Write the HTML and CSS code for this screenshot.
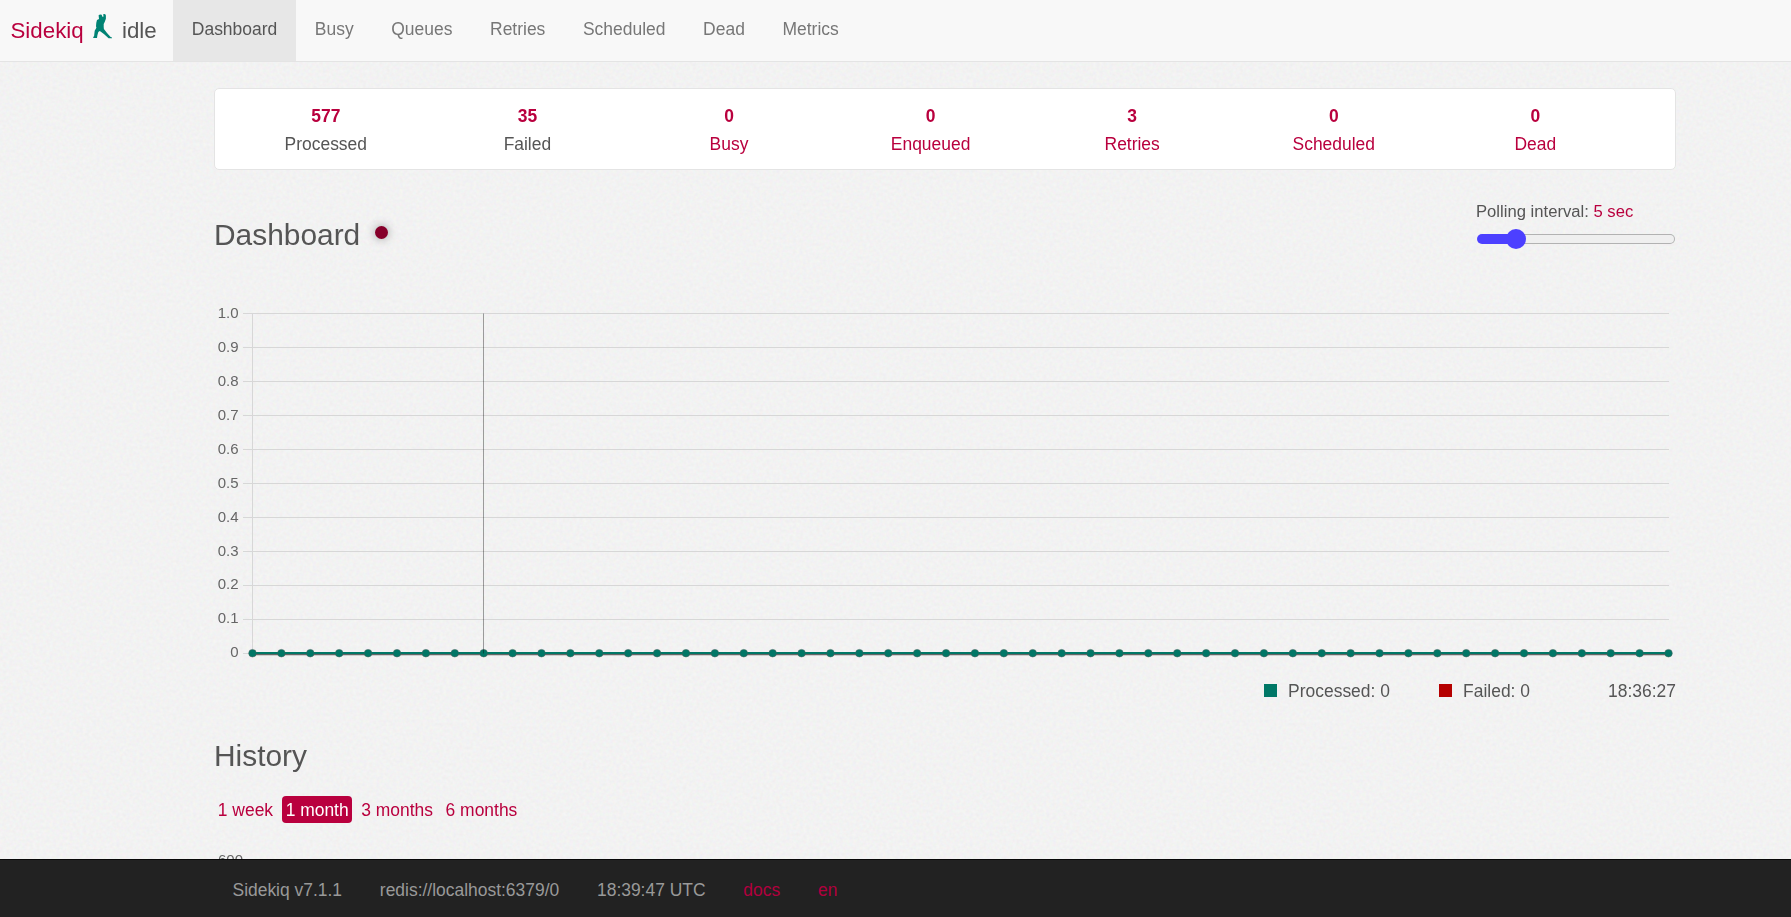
FILE: index.html
```html
<!DOCTYPE html>
<html lang="en">
<head>
<meta charset="utf-8">
<title>Sidekiq</title>
<link rel="stylesheet" href="styles.css">
</head>
<body>
<svg class="texture" aria-hidden="true">
  <filter id="grain" x="0" y="0" width="100%" height="100%" color-interpolation-filters="sRGB">
    <feTurbulence type="fractalNoise" baseFrequency="0.3" numOctaves="2" seed="4"/>
    <feColorMatrix type="matrix" values="0.05 0 0 0 0.924  0 0.05 0 0 0.924  0 0 0.05 0 0.924  0 0 0 0 1"/>
  </filter>
  <rect width="100%" height="100%" filter="url(#grain)"/>
</svg>
<nav class="navbar">
  <a class="brand">Sidekiq</a>
  <svg class="kick" viewBox="0 0 19 25"><path fill="#008374" d="M5.600 1.200 7 .5l1.700.3.6 1.900 1.300-.1-.5-2.400 2-.2.8 1.600v3.200l-1.200 3.200-1 1.900v3l.2 2.200 3.100 4 3.600 4 1.500.5v.7h-3.500l-4.700-4.200-4.100-3.100-1.500 1-.9 3.200-.4 2.700H.2l.1-1 .8-.8.6-5.400 1.700-3-.4-1.400.3-3.600L4 6.100 6 5z"/></svg>
  <span class="status">idle</span>
  <a class="tab active">Dashboard</a><a class="tab">Busy</a><a class="tab">Queues</a><a class="tab">Retries</a><a class="tab">Scheduled</a><a class="tab">Dead</a><a class="tab">Metrics</a>
</nav>
<main class="container">
  <ul class="summary">
    <li><b>577</b><span>Processed</span></li>
    <li><b>35</b><span>Failed</span></li>
    <li class="link"><b>0</b><span>Busy</span></li>
    <li class="link"><b>0</b><span>Enqueued</span></li>
    <li class="link"><b>3</b><span>Retries</span></li>
    <li class="link"><b>0</b><span>Scheduled</span></li>
    <li class="link"><b>0</b><span>Dead</span></li>
  </ul>
  <header class="heading">
    <h3>Dashboard</h3><i class="beacon"></i>
    <div class="interval">
      <div class="caption">Polling interval: <span class="red">5 sec</span></div>
      <div class="slider"><div class="fill"></div><div class="thumb"></div><div class="rest"></div></div>
    </div>
  </header>
  <svg class="chart" id="chart" viewBox="214 300 1462 366"></svg>
  <div class="legend">
    <span class="entry processed"><i class="swatch"></i>Processed: 0</span>
    <span class="entry failed"><i class="swatch"></i>Failed: 0</span>
    <time>18:36:27</time>
  </div>
  <h3 class="history">History</h3>
  <div class="ranges"><a>1 week</a><a class="chosen">1 month</a><a>3 months</a><a>6 months</a></div>
  <div class="history-axis">600</div>
</main>
<footer class="footer">
  <span>Sidekiq v7.1.1</span><span>redis://localhost:6379/0</span><span>18:39:47 UTC</span><a>docs</a><a>en</a>
</footer>
<script src="chart.js"></script>
</body>
</html>
```
FILE: styles.css
```css
* { box-sizing: border-box; }
html, body { height: 100%; }
body {
  margin: 0;
  overflow: hidden;
  background: #f2f2f2;
  color: #555;
  font: 17.45px/25px "Liberation Sans", Arial, sans-serif;
}
.texture { position: fixed; inset: 0; z-index: -1; width: 100%; height: 100%; }
.navbar {
  display: flex;
  height: 62px;
  padding-left: 10.5px;
  background: #f8f8f8;
  border-bottom: 1px solid #e4e4e4;
}
.brand, .status { font-size: 22.3px; line-height: 61px; }
.brand, .red { color: #b9003e; }
.brand { width: 82.5px; }
.kick { width: 19px; height: 25px; margin-top: 14px; }
.status { width: 51px; margin-left: 10px; }
.tab { padding: 17px 18.8px 0; color: #777; font-size: 17.48px; }
.tab.active { width: 123px; background: #e7e7e7; color: #555; }
.container { width: 1462px; margin: 0 0 0 214px; }
.summary {
  display: flex;
  height: 82px;
  margin: 26px 0 0;
  padding: 15px 0 0 10px;
  list-style: none;
  background: #fff;
  border: 1px solid #e4e4e4;
  border-radius: 5px;
}
.summary li { width: 201.6px; text-align: center; }
.summary b { display: block; height: 28px; color: #b9003e; }
.summary span { display: block; }
.link { color: #b9003e; }
.heading { display: flex; height: 130px; }
h3 { margin: 0; font-size: 29.9px; line-height: 33px; font-weight: 400; }
.heading h3 { width: 147px; margin-top: 48px; }
.beacon {
  width: 13px;
  height: 13px;
  margin: 56px 0 0 14px;
  border-radius: 50%;
  background: #86002a;
  box-shadow: 0 0 10px #999;
}
.interval { width: 200px; margin: 29px 0 0 auto; }
.caption { font-size: 16.65px; }
.slider { display: flex; align-items: center; height: 20px; margin-top: 5px; padding-left: 1px; }
.fill { width: 39px; height: 10px; border-radius: 5px 0 0 5px; background: #4c40ff; }
.thumb { width: 20px; height: 20px; margin: 0 -10px; border-radius: 50%; background: #4c40ff; z-index: 1; }
.rest { width: 159px; height: 10px; border: 1px solid #b2b2b2; border-left: 0; border-radius: 0 5px 5px 0; background: #efefef; }
.chart { display: block; width: 1462px; height: 366px; }
.chart text { font-size: 15px; fill: #666; text-anchor: end; }
.legend { display: flex; justify-content: flex-end; height: 50px; padding-top: 13px; }
.entry { display: flex; }
.swatch { width: 13px; height: 13px; margin: 5px 11px 0 0; }
.processed { width: 175px; }
.failed { width: 169px; }
.processed .swatch { background: #007766; }
.failed .swatch { background: #b50000; }
.history { margin-top: 23px; }
.ranges { display: flex; gap: 5px; margin-top: 24px; }
.ranges a { height: 27px; padding: 1px 3.8px; line-height: 26px; border-radius: 4px; color: #b9003e; }
.ranges .chosen { background: #b9003e; color: #fff; }
.history-axis { margin: 24px 0 0 4px; font-size: 15px; color: #666; }
.footer {
  position: fixed;
  inset: auto 0 0 0;
  display: flex;
  gap: 37.8px;
  height: 58px;
  padding: 18px 0 0 232.5px;
  background: #222;
  border-top: 1px solid #080808;
  color: #999;
}
.footer a { color: #b1003e; }
```
FILE: chart.js
```js
const top0 = 313.5, bottom = 653.5, left = 252.5, right = 1668.5;
let out = '';
for (let i = 0; i <= 10; i++) {
  const y = top0 + i * 34;
  const label = i === 10 ? '0' : ((10 - i) / 10).toFixed(1);
  out += `<path d="M243 ${y}H${right + .5}" stroke="#d7d7d7"/><text x="238.5" y="${y + (i > 7 ? 3.5 : 4.5)}">${label}</text>`;
}
out += `<path d="M${left} ${top0}V${bottom}" stroke="#d7d7d7"/>`;
out += `<path d="M${left} ${bottom + .4}H${right}" stroke="#666" stroke-width="2.6"/>`;
out += `<path d="M${left} ${bottom - .5}H${right}" stroke="#007766" stroke-width="2"/>`;
for (let i = 0; i < 50; i++) {
  const x = left + i * (right - left) / 49;
  out += `<circle cx="${x}" cy="${bottom - .3}" r="3.8" fill="#007766" stroke="#445f5b" stroke-width=".5"/>`;
}
out += `<path d="M483.5 ${top0}V${bottom}" stroke="#000" stroke-opacity=".36"/>`;
document.getElementById('chart').innerHTML = out;
```
